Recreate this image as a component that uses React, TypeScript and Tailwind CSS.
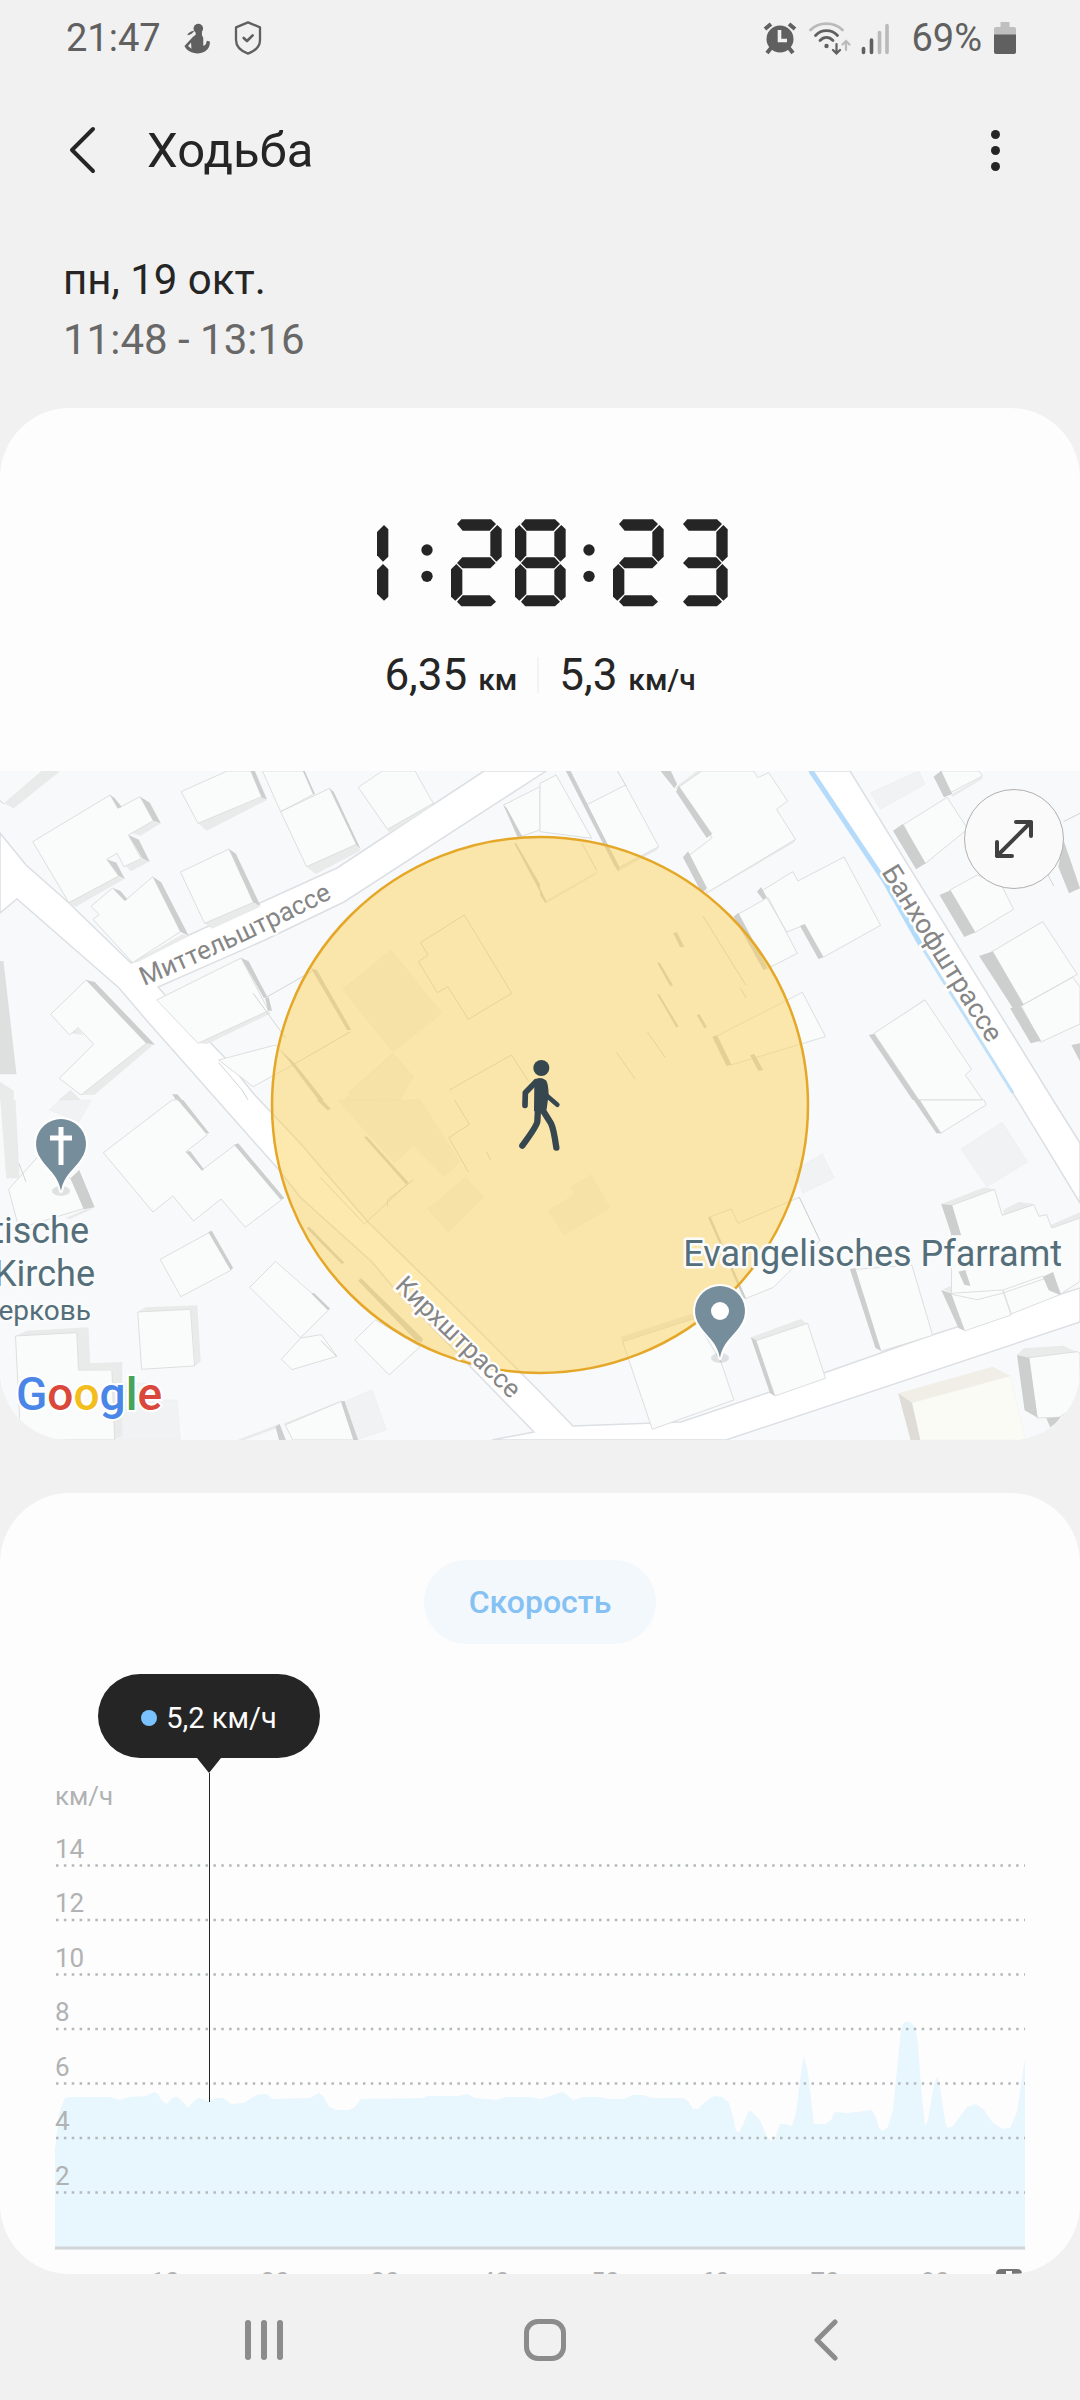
import React from "react";

const SEGMENTS: Record<string, string> = {
  a: "18,14 31,0 120,0 135,14 116,34 35,34",
  b: "152,30 139,17 118,38 118,108 136,127 152,112",
  c: "152,150 136,134 118,152 118,224 139,244 152,232",
  d: "18,247 35,228 116,228 135,247 120,261 31,261",
  e: "0,150 16,134 34,152 34,224 13,244 0,232",
  f: "0,30 13,17 34,38 34,108 16,127 0,112",
  g: "18,131 34,114 118,114 134,131 118,147 34,147",
};

const LCD_DIGITS = [
  { x: -7, on: "bc" },
  { x: 333, on: "abged" },
  { x: 525, on: "abcdefg" },
  { x: 819, on: "abged" },
  { x: 1011, on: "abgcd" },
];

function LcdTime() {
  return (
    <svg viewBox="33 80 1134 276" className="mx-auto block h-[92px] w-[378px] fill-[#252525]" role="img" aria-label="1:28:23">
      {LCD_DIGITS.map((digit) => (
        <g key={digit.x} transform={`translate(${digit.x} 87)`}>
          {digit.on.split("").map((s) => (
            <polygon key={s} points={SEGMENTS[s]} />
          ))}
        </g>
      ))}
      {[261, 747].map((x) => (
        <g key={x}>
          <circle cx={x} cy="179" r="17" />
          <circle cx={x} cy="258" r="17" />
        </g>
      ))}
    </svg>
  );
}

function StatusBar() {
  return (
    <div className="flex h-[76px] items-center pl-[66px] pr-[64px] text-[38px] leading-[44px] text-[#606060]">
      <span>21:47</span>
      <svg viewBox="42 30 84 100" className="ml-[22px] h-[33px] w-[28px]" fill="#606060" aria-hidden="true">
        <circle cx="88" cy="50" r="14.500" />
        <path d="M80 58h19v12l4 8v24c8 0 9-9 11-15l9 2c1 17-9 30-24 34-10 3-22 3-32-1-11-5-18-12-21-19l26-28 8-6zM66 92l-9 11 10 8z" fillRule="evenodd" />
        <path d="M76 56c-4 8-10 13-22 14 4-7 10-12 22-14z" />
      </svg>
      <svg viewBox="190 26 90 108" className="ml-[22px] h-[36px] w-[30px]" fill="none" stroke="#606060" strokeWidth="7" strokeLinejoin="round" strokeLinecap="round" aria-hidden="true">
        <path d="M235 33l36 15v38c0 18-15 33-36 41-21-8-36-23-36-41V48z" />
        <path d="M222 80l10 9 17-17" strokeWidth="8" />
      </svg>
      <div className="ml-auto flex items-center">
        <svg viewBox="0 0 34 34" className="h-[34px] w-[34px]" aria-hidden="true">
          <circle cx="17" cy="18" r="13.500" fill="#606060" />
          <path d="M2 8l6-5M32 8l-6-5" stroke="#606060" strokeWidth="4" />
          <path d="M8 27l-4 5M26 27l4 5" stroke="#606060" strokeWidth="4" />
          <path d="M16.500 9v10.500H24" fill="none" stroke="#f1f1f1" strokeWidth="3.600" />
        </svg>
        <svg viewBox="0 0 42 34" className="ml-[12px] h-[34px] w-[42px]" fill="none" strokeWidth="2.800" strokeLinecap="round" aria-hidden="true">
          <path d="M1.500 9C10 .5 25 .5 33.500 9" stroke="#bababa" />
          <path d="M6.500 14.500c6-6.500 16-6.500 22 0M11 19.500c4-4 9-4 13 0" stroke="#606060" />
          <circle cx="17.500" cy="25" r="2.200" fill="#606060" />
          <path d="M27.500 23v9M24 29l3.500 3.500L31 29" stroke="#606060" strokeWidth="2.200" />
          <path d="M37 29v-9M33.500 23.500L37 20l3.500 3.500" stroke="#bababa" strokeWidth="2.200" />
        </svg>
        <svg viewBox="0 0 28 34" className="ml-[10px] h-[34px] w-[28px]" strokeWidth="3.600" strokeLinecap="round" aria-hidden="true">
          <path d="M2.500 27.500v4M10.500 19v12.500" stroke="#606060" />
          <path d="M18.500 11.500v20M26 4.500v27" stroke="#bababa" />
        </svg>
        <span className="ml-[22px]">69%</span>
        <svg viewBox="0 0 22 34" className="ml-[12px] h-[34px] w-[22px]" aria-hidden="true">
          <path d="M6.500 1h9v5H20q2 0 2 2v7H0V8q0-2 2-2h4.500z" fill="#bfbfbf" />
          <path d="M0 13.500h22V31q0 2-2 2H2q-2 0-2-2z" fill="#606060" />
        </svg>
      </div>
    </div>
  );
}

const HAIR = { stroke: "#d3d5d5", strokeWidth: 1, vectorEffect: "non-scaling-stroke" as const };

type Tile = { x: number; y: number; flat: string; roofs: string; light: string; dark: string; lines?: string };

const TILES: Tile[] = [
  {
    x: 0,
    y: 760,
    flat: "M995 688L1135 570l148 190-143 115zM1140 880l60 70-55 70h-145zM1010 1000l130-120 60 70-40 70z",
    roofs:
      "M95 245L320 105l22 40 65-35 38 72-72 43 37 71-50 24-20-40-30 18 35 50-145 80zM327 384l36 38 81-72 80 165-139 93-115-130 18-14-24-25zM524 336l141-69 71 160-142 63zM526 95L660 33h68l32 77-185 80zM815 155l142-70 78 168-145 67zM762 33l53 122 95-52-30-70zM1040 82l70-49h95l53 97-133 78zM455 720L700 594l80 158-205 98zM147 763L250 660l175 190-190 155-63-50 100-102-45-50-25 22zM1462 135l106-55v130l-58 20zM635 900l165-45 50 60-115 65z",
    light:
      "M120 33h55L40 145 12 130zM200 428l140-80 20 10-140 82zM382 218l63-36 22 8-60 38zM365 318l50-22 20 8-55 30zM575 190l190-80 10 10-175 92zM890 320l145-68 12 20-130 70zM1125 208l130-85 3 12-128 85zM594 490l142-62 20 12-140 66zM575 850l200-98 12 8-185 92zM385 608l145-85 20 4-150 80zM235 1005l190-155 20 4-170 150zM0 965l40 27v28H0zM205 820l22-15 15 20zM170 1020l35-30 30 30z",
    dark:
      "M320 105l22 40 12-4-22-28zM407 110l38 72 22 8-32-62zM373 225l40 70 22 10-32-66zM310 298l35 50 18 10-25-50zM327 384l35 38 8-4-20-25zM444 350l80 165 24 12-80-160zM665 267l70 160 22 12-72-158zM957 85l78 170 12 12-78-172zM728 33l32 80 15 5-35-85zM1462 135l40 95h15l-45-85zM700 594l66 120 10-4-54-106zM770 714l8 38h12l-10-40zM250 660l175 190 25 4-175-188zM903 625l105 185h12l-100-180zM815 870l110 150h15l-85-110zM880 33l30 70h5l-30-70zM1493 250l75 145v-22l-70-125zM500 1003h15l14 17h-18z",
    lines:
      "M1348 465l138 235-126 78-60-98-30 18-55-93 28-20-22-37 127-83M1305 990l180-105 50 80M850 915l168-100M770 714l135-80M735 700l95 135M635 908l70 85 15 27M0 122l12 10",
  },
  {
    x: 540,
    y: 760,
    flat: "M960 98l140-65 18 40-130 75z",
    roofs:
      "M0 70l47-25 103 190L0 215zM135 135l113-60 97 185-115 62zM398 85l72-52h150l12 20 32-15 55 85-32 25 55 90-257 160-54-110 69-55zM640 395l94-60 15 28 134-72 106 205-170 98-54-98-48 20-60-105zM662 412l85 168-90 48-82-165zM1182 112l60 95-125 105-62-118zM1190 390l80-45 72 35 33 68-112 70zM1312 575l148-90 100 158-163 95zM1397 737l150-85 21 30v110l-115 55zM970 820l148-100 135 208-18 17 50 75h-185zM1165 33h110l10 15-112 60zM514 828l248-131 67 133-275 85z",
    light:
      "M230 322l115-62-5 10-112 64zM485 385l257-150-3 12-252 152zM390 85l65-52h15l-70 50zM970 820l148-104-3 9-140 100zM1310 575l150-92-2 9-145 92zM20 420l145-85-2 8-143 86zM1195 103l88-52 2 5-88 55z",
    dark:
      "M75 33h14l142 290-3 12-12-18zM350 33h30l18 40-8 12zM395 95l8-18 97 145-16 12zM415 292l15-18 55 110-15 16zM630 395l12-14 16 30-10 8zM562 470l14-12 85 165-12 8zM755 498l14-6 54 98-14 8zM1143 50l22-18 32 70-24 10zM1025 212l28-20 67 118-28 18zM1160 405l32-14 72 126-32 14zM1275 588l40-14 90 160-30 14zM1365 745l30-8 60 105-30 8zM955 825l15-4 130 199h-18zM1505 320l15-80 48 145-32 15zM1543 855l25-5v55zM387 520l10-4 22 44-12 2zM340 608h8l38 68-8 2zM340 703h6l56 96-6 4zM455 765l8-2 22 38-8 4zM500 830l14-4 42 88-14 4zM610 886l12-4 26 48-14 2zM0 385l20 40-4 5-16-25z",
    lines: "M473 468l125 208M582 685l16 28M222 877l54 80M312 816l52 77M122 250l43 82M1475 345l17 33M1520 185l48-25M225 33l25 45",
  },
  {
    x: 0,
    y: 1100,
    flat: "M1000 905l80-36 42 120-85 30zM355 850h85v50h75l8 120H340zM142 30l33-30h90l-35 65zM980 0h240l115 185-45 45-90-92-55 50zM1242 327l110-95 53 60-103 103z",
    roofs:
      "M300 158L500 0h20l82 105-62 50 47 55 95-75 135 165-105 82-70-85-80 66-60-75-58 48zM465 478l142-80 65 112-147 80zM400 636l153-8 12 170-154 10zM45 708l178-10 5 112h97l8 210H60zM725 562l75-78 110 100 45 45-82 84zM817 778l56-64 60-10 45 65-130 40zM1030 720l60-60 130 80-90 85zM25 268l85-98 95 65 40 90-190 60zM828 975l165-72 40 117H850z",
    light:
      "M45 708l32-16 180-10-32 16zM400 636l22-14 150-6-22 12zM228 810l30-20 97-4-30 20zM690 1020l120-48v10l-100 38zM825 970l165-68 8 4-170 72zM190 355l65-30 18 0-70 32zM1 0h44l12 235H18zM553 622l20-6 10 168-16 14zM222 692l35-8 5 105-35 22zM325 795l30-8v220l-24 13z",
    dark:
      "M516 0h16l76 100h-10zM680 134l12-4 134 165-10 4zM540 155l12-2 40 55-6 4zM605 396l10-4 62 112-8 6zM205 235l25-25 45 112-32 6zM905 582l6-4 48 48-8 4zM990 905l10-3 40 118h-14zM800 980l12-8 18 48h-20zM1056 110h10l122 140-10 2zM890 385l8-5 102 108-8 4zM1040 542l8-8 180 182-4 12-16-6zM920 0h16l25 27-10 4z",
    lines: "M930 232l130 142M1060 370l125-120M1320 0l43 73-60 40 57 103M1412 155l13 25M932 722l46 48M55 190l20 55M1125 320v-20l75-60",
  },
  {
    x: 540,
    y: 1100,
    flat: "M1222 147l120-80 74 118-118 76zM738 210l82-48 35 72-92 46zM25 332l75-48-10-24 58-35 55 98-133 82z",
    roofs:
      "M1195 316l125-48 22 78 92-32 15 35 22-5 15 40 82-30v190l-56 38-22-55-145 52-75 20-75-16zM1420 773l140-18 8 5v150l-60 42-65 2zM627 722l150-52 52 165-147 53zM915 508l165-12 60 210-150 48zM240 725l210-70 75 130 38 115-237 88zM1193 580l150-10 25 75-135 48zM575 370l178-78 60 130-135 140-83 35-105-245 65-25zM1345 570l115-42 50 56-142 58zM1100 0h190l5 15-132 85z",
    light:
      "M1165 312l125-50 30 6-125 48zM1345 330l45-24 45 6-88 36zM1482 375l86-38v18l-82 36zM1170 568l50-22 30 8-55 26zM612 712l145-55 20 15-150 50zM235 710l215-72v30l-208 72zM1385 765l20-20 115-8 40 20-140 18zM575 370l178-80 2 6-176 82z",
    dark:
      "M1165 312l32 4 26 90h-28zM1215 515l20-5 15 48-18-4zM1165 570l28 10 40 112-18-8zM1460 530l30-14 22 70-35-15zM900 508l15-4 75 248-16-8zM612 712l15 8 55 168-14-8zM1085 0h18l62 100h-14zM488 352l8 0 102 242h-8zM1385 765l35 8 25 180-38-22zM1470 955l42-4-28 36z",
    lines: "M753 292l60 130",
  },
];

const ROADS =
  "M0 833L26 865 69 903 131 963 189 935 337 868 484 771H546L540 775 344 902 265 940 158 987 165 995 227 1060 253 1093 300 1143 368 1222 448 1300 540 1392 573 1426 681 1422 767 1393 932 1335 1080 1288V1322L726 1440H492L534 1432 393 1287 372 1262 300 1197 279 1170 217 1100 148 1022 119 988 17 899 0 913Z";

function Pin({ x, y, children }: { x: number; y: number; children: React.ReactNode }) {
  return (
    <g transform={`translate(${x} ${y})`}>
      <ellipse cx="0" cy="47" rx="9" ry="5" fill="#000" opacity=".1" />
      <path
        d="M0 47C-3 31-12 27-20 15A25 25 0 1 1 20 15C12 27 3 31 0 47Z"
        fill="#768e9b"
        stroke="#fff"
        strokeWidth="4"
        strokeLinejoin="round"
        paintOrder="stroke"
      />
      {children}
    </g>
  );
}

function MapDrawing() {
  return (
    <svg viewBox="0 771 1080 669" className="block h-auto w-full font-[Roboto,sans-serif]" role="img" aria-label="Карта">
      <rect y="771" width="1080" height="669" fill="#f8f9fb" />
      <path d={ROADS} fill="#fff" stroke="#dcdfe3" strokeWidth="1.500" />
      <path d="M809 771L884 877 922 947 1013 1093 1080 1203V1143L1053 1100 850 771Z" fill="#fff" stroke="#dcdfe3" strokeWidth="1.500" />
      <path d="M811 771L884 880 922 947" fill="none" stroke="#b5dbfb" strokeWidth="5" />
      <path d="M922 947L1013 1093" fill="none" stroke="#c0e0f8" strokeWidth="3" />
      {TILES.map((t) => (
        <g key={`${t.x}-${t.y}`} transform={`translate(${t.x} ${t.y}) scale(.3444 .3333)`}>
          <path d={t.flat} fill="#f1f2f3" stroke="#e6e7e8" strokeWidth="1" />
          <path d={t.light} fill="#e9ebea" />
          <path d={t.roofs} fill="#fafcfb" stroke="#dddfdf" strokeWidth="1" vectorEffect="non-scaling-stroke" />
          <path d={t.dark} fill="#cdcfce" />
          {t.lines && <path d={t.lines} fill="none" {...HAIR} />}
        </g>
      ))}
      <g transform="translate(0 760) scale(.3444 .3333)">
        <path d="M0 603h10l38 340H0z" fill="#dedfdf" />
      </g>
      <g transform="translate(540 1100) scale(.3444 .3333)">
        <path d="M1080 908l285-80 45 192h-306z" fill="#fbfbf6" stroke="#ececea" />
        <path d="M1040 880l275-80 50 28-285 80z" fill="#f1ede7" />
        <path d="M1040 880l40 28 24 112h-28z" fill="#dfdbd6" />
      </g>
      <circle cx="540" cy="1105" r="268" fill="#fbd15c" fillOpacity=".5" stroke="#e5a728" strokeWidth="2.500" />
      <g transform="translate(500 1045) scale(.3333)" fill="none" stroke="#37474f" strokeLinecap="round" strokeLinejoin="round">
        <circle cx="124" cy="69" r="24" fill="#37474f" stroke="none" />
        <path d="M106 106q14-9 30 2 6 8 7 40l-6 44-32 4 1-80z" fill="#37474f" strokeWidth="6" />
        <path d="M108 110L76 143l-1 38" strokeWidth="17" />
        <path d="M138 150l34 29" strokeWidth="14" />
        <path d="M114 190l-2 40q-2 14-45 72" strokeWidth="19" />
        <path d="M126 192l27 43q8 16 16 73" strokeWidth="19" />
      </g>
      <Pin x={61} y={1144}>
        <path d="M0-17v38M-11-6h22" stroke="#fff" strokeWidth="5" />
      </Pin>
      <Pin x={720} y={1311}>
        <circle r="9" fill="#fff" />
      </Pin>
      <defs>
        <path id="mittel" d="M144 986Q246 943 344 892" />
      </defs>
      <g fontSize="26" fill="#868686" stroke="#fff" strokeWidth="5" strokeLinejoin="round" paintOrder="stroke">
        <text>
          <textPath href="#mittel">Миттельштрассе</textPath>
        </text>
        <text transform="translate(881 872) rotate(58)" fontSize="27">
          Банхофштрассе
        </text>
        <text transform="translate(394 1287) rotate(44)">Кирхштрассе</text>
      </g>
      <g fontSize="36" fill="#546e7a" stroke="#fafbfb" strokeWidth="5" strokeLinejoin="round" paintOrder="stroke">
        <text x="1062" y="1266" textAnchor="end">Evangelisches Pfarramt</text>
        <text x="89" y="1243" textAnchor="end">tische</text>
        <text x="95" y="1286" textAnchor="end">Kirche</text>
        <text x="91" y="1320" fontSize="28" textAnchor="end">ерковь</text>
      </g>
      <text x="16" y="1410" fontSize="46" fontWeight="500" stroke="#fff" strokeWidth="4" paintOrder="stroke">
        <tspan fill="#4a86e8">G</tspan>
        <tspan fill="#d9483b">o</tspan>
        <tspan fill="#f2bd1d">o</tspan>
        <tspan fill="#4a86e8">g</tspan>
        <tspan fill="#43a45a">l</tspan>
        <tspan fill="#d9483b">e</tspan>
      </text>
    </svg>
  );
}

const SPEED: number[] = [
  55, 2150, 59, 2113, 65, 2098, 72, 2097, 110, 2097, 120, 2100, 129, 2097, 146, 2096, 154, 2092, 158, 2094, 162, 2101, 167, 2104,
  172, 2098, 177, 2097, 182, 2101, 188, 2108, 193, 2102, 198, 2098, 209, 2101, 217, 2098, 223, 2098, 231, 2104, 244, 2103, 256, 2095,
  267, 2094, 272, 2099, 310, 2098, 319, 2093, 324, 2097, 329, 2107, 336, 2110, 349, 2110, 355, 2107, 361, 2099, 423, 2098, 427, 2096,
  458, 2096, 467, 2094, 475, 2098, 496, 2100, 506, 2097, 530, 2097, 540, 2099, 547, 2097, 562, 2092, 567, 2095, 573, 2100, 583, 2097,
  600, 2097, 609, 2099, 624, 2099, 633, 2095, 643, 2095, 652, 2098, 683, 2098, 688, 2101, 693, 2109, 698, 2109, 705, 2102, 714, 2096,
  722, 2097, 729, 2103, 733, 2117, 736, 2131, 739, 2132, 743, 2125, 748, 2112, 751, 2111, 760, 2120, 767, 2137, 771, 2141, 775, 2138,
  780, 2124, 786, 2124, 792, 2126, 796, 2113, 801, 2073, 804, 2056, 808, 2073, 814, 2124, 826, 2124, 831, 2120, 835, 2112, 848, 2113,
  864, 2111, 872, 2110, 876, 2118, 879, 2128, 883, 2131, 888, 2127, 893, 2110, 897, 2070, 901, 2030, 904, 2022, 910, 2022, 915, 2027,
  918, 2043, 921, 2087, 925, 2126, 928, 2120, 934, 2085, 937, 2076, 940, 2087, 945, 2120, 947, 2128, 953, 2126, 967, 2107, 976, 2104,
  984, 2110, 993, 2123, 1003, 2129, 1010, 2128, 1017, 2112, 1024, 2065, 1025, 2060,
];

const AREA = `M${SPEED.join(" ")} V2247 H55 Z`;

const LEVELS = [14, 12, 10, 8, 6, 4, 2];
const MINUTES = [10, 20, 30, 40, 50, 60, 70, 80];

function SpeedChart() {
  return (
    <svg viewBox="55 1773 970 501" className="block h-auto w-full font-[Roboto,sans-serif]" role="img" aria-label="График скорости">
      <path d={AREA} fill="#e8f6fe" />
      {LEVELS.map((level) => {
        const y = 2247 - level * 27.25;
        return (
          <g key={level}>
            <line x1="56" x2="1025" y1={y} y2={y} stroke="#b4b8ba" strokeWidth="2.500" strokeDasharray="2.500 5.370" />
            <text x="55" y={y - 8} fontSize="26" fill="#b0b2b3">
              {level}
            </text>
          </g>
        );
      })}
      <text x="55" y="1805" fontSize="26" fill="#b0b2b3">
        км/ч
      </text>
      <path d="M55 2248H1025" stroke="#d0d5d8" strokeWidth="3" />
      <path d="M209.500 1773V2102" stroke="#252525" strokeWidth="1" />
      {MINUTES.map((m) => (
        <text key={m} x={55 + m * 11} y="2291" fontSize="26" fill="#b0b2b3" textAnchor="middle">
          {m}
        </text>
      ))}
      <path d="M996 2274q0-5 5-5h16q5 0 5 5z" fill="#757575" />
      <path d="M1006 2274v-3h6v3z" fill="#fdfdfd" />
    </svg>
  );
}

export default function App() {
  return (
    <div className="flex min-h-screen flex-col bg-[#f1f1f1] font-[Roboto,sans-serif] text-[#252525]">
      <StatusBar />
      <header className="flex h-[148px] items-center pl-[58px] pr-[60px]">
        <button type="button" aria-label="Назад" className="flex h-[60px] w-[48px] items-center justify-center">
          <svg viewBox="0 0 28 48" className="h-[48px] w-[28px]" fill="none" stroke="#252525" strokeWidth="4" strokeLinecap="round" strokeLinejoin="round">
            <path d="M25 3L4 24l21 21" />
          </svg>
        </button>
        <h1 className="ml-[41px] pt-[2px] text-[49px] leading-[60px]">Ходьба</h1>
        <button type="button" aria-label="Ещё" className="ml-auto flex h-[60px] w-[50px] flex-col items-center justify-center gap-[7px]">
          <span className="size-[9px] rounded-full bg-[#252525]" />
          <span className="size-[9px] rounded-full bg-[#252525]" />
          <span className="size-[9px] rounded-full bg-[#252525]" />
        </button>
      </header>
      <div className="flex h-[184px] flex-col pl-[63px] pt-[26px] text-[42px] leading-[60px]">
        <p>пн, 19 окт.</p>
        <p className="text-[#686868]">11:48 - 13:16</p>
      </div>

      <main className="flex flex-col gap-[53px]">
        <section className="overflow-hidden rounded-[70px] bg-[#fdfdfd]">
          <div className="pb-[66px] pt-[109px]">
            <LcdTime />
            <div className="mt-[36px] flex h-[60px] items-center justify-center text-[44px] leading-[60px]">
              <p>
                6,35 <span className="text-[30px] font-medium leading-none">км</span>
              </p>
              <span className="mx-[20px] h-[36px] w-[2px] bg-[#f3f3f3]" />
              <p>
                5,3 <span className="text-[30px] font-medium leading-none">км/ч</span>
              </p>
            </div>
          </div>
          <div className="relative">
            <MapDrawing />
            <button
              type="button"
              aria-label="Развернуть карту"
              className="absolute right-[16px] top-[18px] flex size-[100px] items-center justify-center rounded-full border border-[#b0b0b0] bg-[#fafafa]"
            >
              <svg viewBox="0 0 40 40" className="size-[40px]" fill="none" stroke="#404040" strokeWidth="4" strokeLinecap="round" strokeLinejoin="round">
                <path d="M3 37L37 3M22 3h15v14M3 23v14h15" />
              </svg>
            </button>
          </div>
        </section>

        <section className="overflow-hidden rounded-[70px] bg-[#fdfdfd] px-[55px] pt-[67px]">
          <button type="button" className="mx-auto block h-[84px] w-[232px] rounded-full bg-[#f3f8fc] text-[32px] font-medium leading-[40px] text-[#85c1f3]">
            Скорость
          </button>
          <div className="ml-[43px] mt-[30px] flex w-[222px] flex-col items-center">
            <div className="flex h-[84px] w-full items-center justify-center gap-[9px] rounded-full bg-[#252525] pt-[4px] text-[29px] leading-[40px] text-[#fdfdfd]">
              <span className="size-[16px] rounded-full bg-[#79c1ff]" />
              <span>5,2 км/ч</span>
            </div>
            <svg viewBox="0 0 24 15" className="h-[15px] w-[24px] fill-[#252525]" aria-hidden="true">
              <path d="M0 0h24L12 15z" />
            </svg>
          </div>
          <SpeedChart />
        </section>
      </main>

      <nav className="grid h-[126px] grid-cols-3 items-center pl-[123px] pr-[113px] pt-[6px]">
        <button type="button" aria-label="Недавние" className="flex h-[80px] items-center justify-center gap-[10px]">
          <span className="h-[40px] w-[6px] rounded-full bg-[#8c8c8c]" />
          <span className="h-[40px] w-[6px] rounded-full bg-[#8c8c8c]" />
          <span className="h-[40px] w-[6px] rounded-full bg-[#8c8c8c]" />
        </button>
        <button type="button" aria-label="Домой" className="flex h-[80px] items-center justify-center">
          <span className="size-[42px] rounded-[14px] border-[5px] border-[#8c8c8c]" />
        </button>
        <button type="button" aria-label="Назад" className="flex h-[80px] items-center justify-center">
          <svg viewBox="0 0 24 42" className="h-[42px] w-[24px]" fill="none" stroke="#8c8c8c" strokeWidth="5" strokeLinecap="round" strokeLinejoin="round">
            <path d="M21 3L3 21l18 18" />
          </svg>
        </button>
      </nav>
    </div>
  );
}
